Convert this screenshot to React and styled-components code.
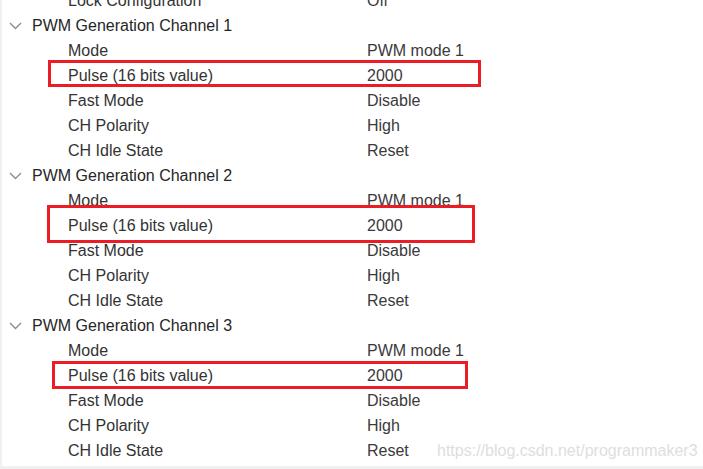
import React from "react";
import styled, {createGlobalStyle} from "styled-components";

const GlobalStyle = createGlobalStyle`
  html, body {
    margin: 0;
    padding: 0;
    background: #ffffff;
  }
  body {
    font-family: "Liberation Sans", Arial, sans-serif;
  }
`

const Page = styled.div`
  position: relative;
  width: 703px;
  height: 469px;
  box-sizing: border-box;
  padding: 0 0 3px 2px;
  background: #f0f0f0;
  overflow: hidden;
`

const Panel = styled.div`
  height: 100%;
  background: #ffffff;
  overflow: hidden;
`

const List = styled.div`
  margin-top: -12px;
  display: flex;
  flex-direction: column;
`

const Row = styled.div`
  position: relative;
  display: flex;
  align-items: center;
  height: 25px;
  font-size: 16px;
  color: #333333;
  white-space: nowrap;
`

const Chevron = styled.span`
  display: flex;
  align-items: center;
  width: 23px;
  margin-left: 7px;
`

const HeadingText = styled.span`
  color: #262626;
`

const Label = styled.span`
  width: 299px;
  padding-left: 66px;
`

const Value = styled.span`
  color: #3a3a3a;
`

const Mark = styled.span`
  position: absolute;
  left: ${p => p.$box.left}px;
  width: ${p => p.$box.width}px;
  top: ${p => p.$box.top}px;
  height: ${p => p.$box.height}px;
  box-sizing: border-box;
  border: 3px solid #ec1c24;
  pointer-events: none;
`

const Watermark = styled.div`
  position: absolute;
  left: 437px;
  top: 441px;
  font-size: 16px;
  line-height: 20px;
  color: #dedede;
  font-family: "Liberation Sans", Arial, sans-serif;
`

const channels = [
    {name: "PWM Generation Channel 1", mark: {left: 46, width: 433, top: -3, height: 27}},
    {name: "PWM Generation Channel 2", mark: {left: 45, width: 428, top: -8, height: 38}},
    {name: "PWM Generation Channel 3", mark: {left: 50, width: 416, top: -2, height: 28}},
]

const params = [
    ["Mode", "PWM mode 1"],
    ["Pulse (16 bits value)", "2000"],
    ["Fast Mode", "Disable"],
    ["CH Polarity", "High"],
    ["CH Idle State", "Reset"],
]

const ChevronDown = () => (
    <svg width="13" height="8" viewBox="0 0 13 8">
        <polyline points="1,1 6.5,6.5 12,1" fill="none" stroke="#8c8c8c" strokeWidth="1.4"/>
    </svg>
)

const ParamRow = ({label, value, mark}) => (
    <Row>
        <Label>{label}</Label>
        <Value>{value}</Value>
        {mark && <Mark $box={mark}/>}
    </Row>
)

const Channel = ({channel}) => (
    <React.Fragment>
        <Row>
            <Chevron><ChevronDown/></Chevron>
            <HeadingText>{channel.name}</HeadingText>
        </Row>
        {params.map(([label, value], i) =>
            <ParamRow key={label} label={label} value={value} mark={i === 1 ? channel.mark : null}/>)}
    </React.Fragment>
)

export default function App() {
    return (
        <Page>
            <GlobalStyle/>
            <Panel>
                <List>
                    <ParamRow label="Lock Configuration" value="Off"/>
                    {channels.map(c => <Channel key={c.name} channel={c}/>)}
                </List>
            </Panel>
            <Watermark>https://blog.csdn.net/programmaker3</Watermark>
        </Page>
    )
}
